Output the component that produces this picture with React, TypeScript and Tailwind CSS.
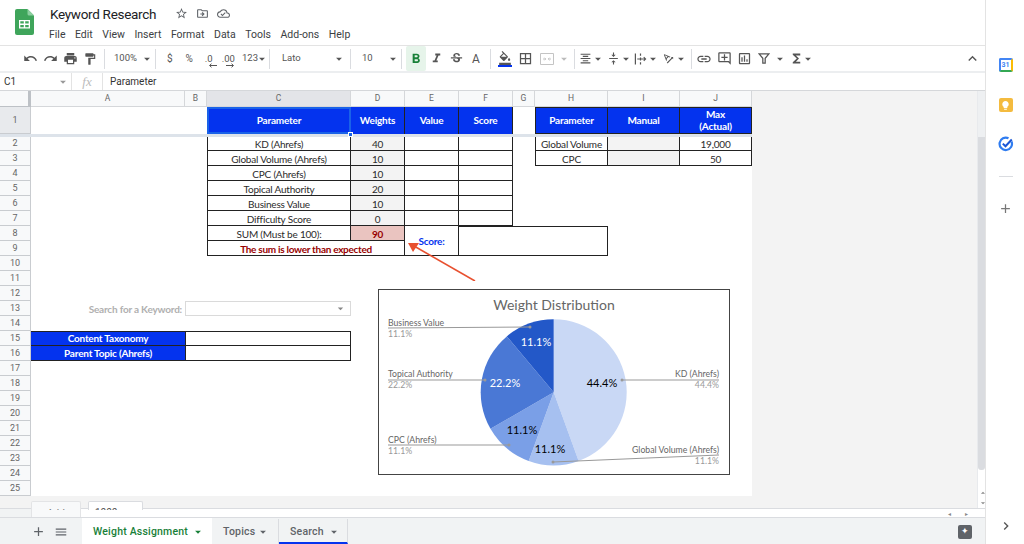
import React from 'react';
import {
  MdUndo, MdRedo, MdPrint, MdFormatPaint, MdFormatBold, MdFormatItalic, MdStrikethroughS,
  MdFormatColorFill, MdBorderAll, MdFormatAlignCenter, MdVerticalAlignCenter,
  MdTextRotationAngleup, MdLink, MdOutlineAddComment, MdOutlineInsertChart,
  MdFunctions, MdExpandLess, MdStarBorder, MdOutlineDriveFileMove,
  MdOutlineCloudDone, MdAdd, MdMenu, MdChevronRight, MdArrowDropDown, MdLightbulb,
  MdArrowDropUp,
} from 'react-icons/md';

const menus = ['File', 'Edit', 'View', 'Insert', 'Format', 'Data', 'Tools', 'Add-ons', 'Help'];
const columns = ['A', 'B', 'C', 'D', 'E', 'F', 'G', 'H', 'I', 'J'];

const line = 'border-r border-b border-[#222]';
const blueCell = 'flex items-center justify-center bg-[#0433ee] pb-px font-bold text-white';

function Sep() {
  return <div className="mx-[4px] h-[20px] w-px bg-[#dadce0]" />;
}

function Tool({ children, w = 'w-[20px]', className = '' }: { children: React.ReactNode; w?: string; className?: string }) {
  return <div className={`flex h-[25px] shrink-0 items-center justify-center text-[#555] ${w} ${className}`}>{children}</div>;
}

function Picker({ label, w, pad, caret = '' }: { label: string; w: string; pad: string; caret?: string }) {
  return (
    <div className={`flex h-[25px] shrink-0 items-center justify-between text-[#555] ${w} ${pad}`}>
      <span>{label}</span>
      <Caret className={`text-[#555] ${caret}`} />
    </div>
  );
}

function Caret({ className = 'text-[#555]' }: { className?: string }) {
  return <MdArrowDropDown size={14} className={`shrink-0 ${className}`} />;
}

function Decimal({ label, dir }: { label: string; dir: 'left' | 'right' }) {
  return (
    <div className="relative leading-none">
      <span>{label}</span>
      <svg className="absolute top-[9px] left-[3px]" width="10" height="5" viewBox="0 0 10 5">
        {dir === 'left' ? (
          <path d="M9 2.5H2M3.5 .7 1.5 2.5 3.5 4.3" fill="none" stroke="#555" />
        ) : (
          <path d="M1 2.5H8M6.500 .7 8.500 2.500 6.500 4.300" fill="none" stroke="#555" />
        )}
      </svg>
    </div>
  );
}

function MergeIcon() {
  return (
    <svg width="14" height="12" viewBox="0 0 14 12" fill="none" stroke="#c4c4c4">
      <path d="M.5 4V.5H13.500V4M.5 8V11.500H13.500V8M.5 4V8M13.500 4V8" />
      <path d="M3 6H5.500M4.500 4.700 5.800 6 4.500 7.300M11 6H8.500M9.500 4.700 8.200 6 9.500 7.300" />
    </svg>
  );
}

function OverflowIcon() {
  return (
    <svg width="14" height="14" viewBox="0 0 14 14" fill="none" stroke="#555">
      <path d="M1.500 1V13" strokeWidth="1.300" />
      <path d="M7 1V3.500M7 5.500V8.500M7 10.500V13" strokeWidth="1.300" />
      <path d="M3.500 7H12.500M10.500 5 12.500 7 10.500 9" strokeWidth="1.200" />
    </svg>
  );
}

function FilterIcon() {
  return (
    <svg width="12" height="11" viewBox="0 0 14 13" fill="none" stroke="#555" strokeWidth="1.500">
      <path d="M1.200 1H12.800L8.400 6.300V12H5.600V6.300Z" />
    </svg>
  );
}

function TasksIcon() {
  return (
    <svg width="16" height="16" viewBox="0 0 16 16" fill="none">
      <path d="M13.500 5.500A6.200 6.200 0 1 1 10.500 2.300" stroke="#2f7cf0" strokeWidth="2.200" />
      <path d="M4.800 7.600 7.500 10.300 13.800 3.500" stroke="#1a56d6" strokeWidth="2" />
    </svg>
  );
}

function RowHead({ n, active = false }: { n: number; active?: boolean }) {
  return (
    <div className={`flex items-center justify-center border-r border-b border-[#c9ccd0] font-['Roboto',sans-serif] text-[9px] tracking-normal text-[#666] ${active ? 'bg-[#e8eaed]' : 'bg-[#f8f9fa]'}`}>
      {n}
    </div>
  );
}

function Blank({ span = '' }: { span?: string }) {
  return <div className={span} />;
}

function Text({ children, gray = false, className = '' }: { children?: React.ReactNode; gray?: boolean; className?: string }) {
  return (
    <div className={`flex items-center justify-center whitespace-nowrap pt-px ${line} ${gray ? 'bg-[#f3f3f3]' : ''} ${className}`}>
      {children}
    </div>
  );
}

function ParamRow({ n, label, weight, extra }: { n: number; label: string; weight: string; extra?: React.ReactNode }) {
  return (
    <>
      <RowHead n={n} />
      <Blank />
      <Blank />
      <Text className="border-l">{label}</Text>
      <Text gray>{weight}</Text>
      <Text />
      <Text />
      {extra ?? <Blank span="col-span-4" />}
    </>
  );
}

function EmptyRow({ n }: { n: number }) {
  return (
    <>
      <RowHead n={n} />
      <Blank span="col-span-10" />
    </>
  );
}

function PieChart() {
  const cx = 175.7;
  const cy = 103.3;
  const r = 73;
  const pt = (deg: number) => {
    const a = (deg * Math.PI) / 180;
    return `${cx + r * Math.sin(a)} ${cy - r * Math.cos(a)}`;
  };
  const slices = [
    { from: 0, to: 160, color: '#c9d8f5' },
    { from: 160, to: 200, color: '#a6c0f0' },
    { from: 200, to: 240, color: '#7a9fe7' },
    { from: 240, to: 320, color: '#4a78d5' },
    { from: 320, to: 360, color: '#2358c8' },
  ];
  const leaders: [number, number, number, number][] = [
    [10, 39, 152, 38],
    [10, 91, 107, 91],
    [10, 156, 131, 156],
    [341, 91, 244, 91],
    [341, 166, 175, 173],
  ];
  return (
    <svg width="350" height="184" className="font-['Lato',sans-serif]">
      <g transform="translate(-1 -1)">
        <text x="176" y="21" textAnchor="middle" fontSize="14" fill="#666">Weight Distribution</text>
        {slices.map((s) => (
          <path
            key={s.from}
            d={`M${cx} ${cy} L${pt(s.from)} A${r} ${r} 0 ${s.to - s.from > 180 ? 1 : 0} 1 ${pt(s.to)} Z`}
            fill={s.color}
          />
        ))}
        {leaders.map(([x1, y1, x2, y2]) => (
          <g key={x1 + '-' + y1}>
            <line x1={x1} y1={y1} x2={x2} y2={y2} stroke="#999" />
            <circle cx={x2} cy={y2} r="1.500" fill="#999" />
          </g>
        ))}
        <g fontSize="8.700" fill="#666">
          <text x="10" y="37">Business Value</text>
          <text x="10" y="88">Topical Authority</text>
          <text x="10" y="154">CPC (Ahrefs)</text>
          <text x="341" y="88" textAnchor="end">KD (Ahrefs)</text>
          <text x="341" y="164" textAnchor="end">Global Volume (Ahrefs)</text>
        </g>
        <g fontSize="8.700" fill="#999">
          <text x="10" y="48">11.1%</text>
          <text x="10" y="99">22.2%</text>
          <text x="10" y="165">11.1%</text>
          <text x="341" y="99" textAnchor="end">44.4%</text>
          <text x="341" y="175" textAnchor="end">11.1%</text>
        </g>
        <g fontSize="11" textAnchor="middle">
          <text x="158" y="57" fill="#fff">11.1%</text>
          <text x="127" y="98" fill="#fff">22.2%</text>
          <text x="224" y="98" fill="#000">44.4%</text>
          <text x="144" y="145" fill="#000">11.1%</text>
          <text x="172" y="164" fill="#000">11.1%</text>
        </g>
      </g>
    </svg>
  );
}

function Sheet() {
  return (
    <div className="relative h-[426px] overflow-hidden bg-[#f3f3f3]">
      <div className="grid w-[752px] grid-cols-[31px_154px_22px_144px_54px_54px_54px_22px_73px_72px_72px] grid-rows-[16px_27px_3px_14px_repeat(23,15px)] bg-white font-['Lato',sans-serif] text-[10px] leading-none tracking-[-0.2px] text-[#2b2b2b]">
        {/* column letters */}
        <div className="border-r-[3px] border-b border-[#bdc1c6] bg-[#f8f9fa]" />
        {columns.map((c) => (
          <div key={c} className={`flex items-center justify-center border-r border-b border-[#d5d7da] font-['Roboto',sans-serif] text-[8.5px] tracking-normal text-[#666] ${c === 'C' ? 'bg-[#e3e4e8]' : 'bg-[#f8f9fa]'}`}>
            {c}
          </div>
        ))}

        {/* row 1 */}
        <RowHead n={1} active />
        <Blank span="col-span-2" />
        <div className={`${blueCell} border-2 border-[#1a62e8]`}>Parameter</div>
        <div className={`${blueCell} border-r border-[#222]`}>Weights</div>
        <div className={`${blueCell} border-r border-[#222]`}>Value</div>
        <div className={`${blueCell} border-r border-[#222]`}>Score</div>
        <Blank />
        <div className={`${blueCell} border border-[#222]`}>Parameter</div>
        <div className={`${blueCell} border-y border-r border-[#222]`}>Manual</div>
        <div className={`${blueCell} border-y border-r border-[#222] text-center leading-[12px]`}>Max<br />(Actual)</div>

        {/* frozen row divider */}
        <div className="col-span-11 bg-[#dde3ea]" />

        <ParamRow
          n={2}
          label="KD (Ahrefs)"
          weight="40"
          extra={
            <>
              <Blank />
              <Text className="border-l">Global Volume</Text>
              <Text gray />
              <Text>19,000</Text>
            </>
          }
        />
        <ParamRow
          n={3}
          label="Global Volume (Ahrefs)"
          weight="10"
          extra={
            <>
              <Blank />
              <Text className="border-l">CPC</Text>
              <Text gray />
              <Text>50</Text>
            </>
          }
        />
        <ParamRow n={4} label="CPC (Ahrefs)" weight="10" />
        <ParamRow n={5} label="Topical Authority" weight="20" />
        <ParamRow n={6} label="Business Value" weight="10" />
        <ParamRow n={7} label="Difficulty Score" weight="0" />

        {/* rows 8 and 9 share the score cells */}
        <RowHead n={8} />
        <Blank span="col-span-2" />
        <Text className="border-l">SUM (Must be 100):</Text>
        <div className={`flex items-center justify-center bg-[#eac4c0] pt-px font-bold text-[#980000] ${line}`}>90</div>
        <div className={`row-span-2 flex items-center justify-center pt-px font-bold text-[#0433ee] ${line}`}>Score:</div>
        <div className={`col-span-3 row-span-2 border-t border-[#222] ${line}`} />
        <Blank span="col-span-2" />
        <RowHead n={9} />
        <Blank span="col-span-2" />
        <div className={`col-span-2 flex items-center justify-center border-l pt-px font-bold tracking-[-0.29px] text-[#980000] ${line}`}>The sum is lower than expected</div>
        <Blank span="col-span-2" />

        <EmptyRow n={10} />
        <EmptyRow n={11} />
        <EmptyRow n={12} />

        <RowHead n={13} />
        <div className="flex items-center justify-end pt-px pr-[3px] font-bold text-[#b0b0b0]">Search for a Keyword:</div>
        <div className="col-span-2 flex items-center justify-end border border-[#dadada] pr-[3px]">
          <MdArrowDropDown size={13} className="text-[#888]" />
        </div>
        <Blank span="col-span-7" />

        <EmptyRow n={14} />

        <RowHead n={15} />
        <div className={`${blueCell} border-y border-[#222]`}>Content Taxonomy</div>
        <div className="col-span-2 border-y border-r border-l border-[#222]" />
        <Blank span="col-span-7" />
        <RowHead n={16} />
        <div className={`${blueCell} border-b border-[#222]`}>Parent Topic (Ahrefs)</div>
        <div className="col-span-2 border-r border-b border-l border-[#222]" />
        <Blank span="col-span-7" />

        {[17, 18, 19, 20, 21, 22, 23, 24, 25].map((n) => (
          <EmptyRow key={n} n={n} />
        ))}
      </div>

      {/* selection handle */}
      <div className="absolute top-[41px] left-[348px] h-[5px] w-[5px] border border-white bg-[#1a62e8]" />

      {/* annotation arrow */}
      <svg className="absolute top-[140px] left-[400px]" width="80" height="50">
        <line x1="75" y1="50" x2="14" y2="15" stroke="#e8502f" strokeWidth="1.600" />
        <path d="M8 12 L19 12 L13 21 Z" fill="#e8502f" />
      </svg>

      {/* floating chart */}
      <div className="absolute top-[198px] left-[378px] border border-[#444] bg-white">
        <PieChart />
      </div>

      {/* sheet scrollbars */}
      <div className="absolute top-0 left-[977px] flex h-[417px] w-[8px] flex-col border-l border-[#e8eaed] bg-white">
        <div className="h-[46px] bg-[#eef0f2]" />
        <div className="h-[333px] rounded-b-[3px] bg-[#dadce0]" />
        <div className="flex-1" />
        <MdArrowDropUp size={10} className="text-[#888]" />
        <MdArrowDropDown size={10} className="text-[#888]" />
      </div>
      <div className="absolute top-[417px] left-0 flex h-[9px] w-[985px] items-center justify-end border-t border-[#dadce0] bg-white pr-[7px]">
        <div className="absolute top-0 left-0 h-[9px] w-[31px] bg-[#f1f3f4]" />
        <div className="absolute top-[-8px] left-[31px] h-[17px] w-[50px] rounded-t-[2px] border border-b-0 border-[#e3e4e6] bg-[#f8f9fa]">
          <div className="h-[8px] overflow-hidden pt-[4px] text-center text-[10px] text-[#777]">Add</div>
        </div>
        <div className="absolute top-[-8px] left-[88px] h-[9px] w-[55px] overflow-hidden rounded-t-[2px] border border-b-0 border-[#dadce0] bg-white pt-[3px] pl-[6px] text-[10px] text-[#555]">1000</div>
        <span className="mr-[14px] text-[6px] text-[#888]">◂</span>
        <span className="mr-[10px] text-[6px] text-[#888]">▸</span>
      </div>
    </div>
  );
}

export default function App() {
  return (
    <div className="flex h-[544px] w-[1024px] overflow-hidden bg-white font-['Roboto',sans-serif]">
      <div className="flex w-[985px] shrink-0 flex-col">
        {/* title + menus */}
        <div className="flex h-[46px] border-b border-[#e3e3e3]">
          <div className="flex w-[49px] shrink-0 items-start pt-[9px] pl-[15px]">
            <svg width="19" height="26" viewBox="0 0 19 26">
              <path d="M2 0 H12.500 L19 6.500 V24 a2 2 0 0 1 -2 2 H2 a2 2 0 0 1 -2 -2 V2 a2 2 0 0 1 2 -2 Z" fill="#3fa55b" />
              <path d="M12.500 0 L19 6.500 H14 a1.500 1.500 0 0 1 -1.500 -1.500 Z" fill="#8ccfa0" />
              <path d="M4 11 H15 V19.500 H4 Z M5.300 12.300 V14.600 H8.800 V12.300 Z M10.200 12.300 V14.600 H13.700 V12.300 Z M5.300 16 V18.200 H8.800 V16 Z M10.200 16 V18.200 H13.700 V16 Z" fill="#fff" fillRule="evenodd" />
            </svg>
          </div>
          <div className="flex flex-col">
            <div className="flex h-[24px] items-end gap-[19px] pl-px">
              <span className="text-[13.500px] leading-[20px] tracking-[-0.3px] text-[#202124]">Keyword Research</span>
              <div className="flex items-center gap-[8px] pb-[4px] text-[#5f6368]">
                <MdStarBorder size={13} />
                <MdOutlineDriveFileMove size={13} />
                <MdOutlineCloudDone size={13} />
              </div>
            </div>
            <div className="mt-[3px] flex gap-[9.500px] text-[10.500px] text-[#3c4043]">
              {menus.map((m) => (
                <span key={m}>{m}</span>
              ))}
            </div>
          </div>
        </div>

        {/* toolbar */}
        <div className="flex h-[27px] items-center border-b-2 border-[#eceef0] pl-[20px] text-[9.500px] text-[#555]">
          <Tool><MdUndo size={15} /></Tool>
          <Tool><MdRedo size={15} /></Tool>
          <Tool><MdPrint size={15} /></Tool>
          <Tool><MdFormatPaint size={14} /></Tool>
          <Sep />
          <Picker label="100%" w="w-[42px]" pad="pl-[5px]" caret="-mr-[3px]" />
          <Sep />
          <Tool w="w-[19.500px]"><span className="text-[10px]">$</span></Tool>
          <Tool w="w-[19.500px]"><span className="text-[10px]">%</span></Tool>
          <Tool w="w-[19.500px]"><Decimal label=".0" dir="left" /></Tool>
          <Tool w="w-[19.500px]"><Decimal label=".00" dir="right" /></Tool>
          <Picker label="123" w="w-[31px]" pad="-mr-[4px] pl-[4px]" caret="-ml-[3px]" />
          <Sep />
          <Picker label="Lato" w="w-[72px]" pad="pl-[8px]" />
          <Sep />
          <Picker label="10" w="w-[42px]" pad="pl-[7px]" caret="-mr-[3px]" />
          <Sep />
          <Tool className="h-[21px] rounded-[2px] bg-[#e6f4ea] text-[#188038]"><MdFormatBold size={16} /></Tool>
          <Tool><MdFormatItalic size={15} /></Tool>
          <Tool><MdStrikethroughS size={15} /></Tool>
          <Tool><span className="text-[12px]">A</span></Tool>
          <Sep />
          <Tool className="flex-col">
            <MdFormatColorFill size={14} />
            <div className="h-[2px] w-[14px] bg-[#0433ee]" />
          </Tool>
          <Tool w="w-[21px]"><MdBorderAll size={15} /></Tool>
          <Tool w="w-[22px]"><MergeIcon /></Tool>
          <Tool w="w-[12px]"><Caret className="text-[#bbb]" /></Tool>
          <Sep />
          <Tool w="w-[13px]"><MdFormatAlignCenter size={15} /></Tool>
          <Tool w="w-[12px]" className="mr-[2.700px]"><Caret /></Tool>
          <Tool w="w-[13px]"><MdVerticalAlignCenter size={15} /></Tool>
          <Tool w="w-[12px]" className="mr-[2.700px]"><Caret /></Tool>
          <Tool w="w-[13px]"><OverflowIcon /></Tool>
          <Tool w="w-[12px]" className="mr-[2.700px]"><Caret /></Tool>
          <Tool w="w-[13px]"><MdTextRotationAngleup size={15} /></Tool>
          <Tool w="w-[12px]"><Caret /></Tool>
          <Sep />
          <Tool w="w-[16px]"><MdLink size={16} /></Tool>
          <Tool className="ml-[2px]"><MdOutlineAddComment size={15} /></Tool>
          <Tool><MdOutlineInsertChart size={15} /></Tool>
          <Tool><FilterIcon /></Tool>
          <Tool w="w-[12px]"><Caret /></Tool>
          <Tool><MdFunctions size={15} /></Tool>
          <Tool w="w-[12px]" className="-ml-[4px]"><Caret /></Tool>
          <Tool className="ml-auto mr-[3px]"><MdExpandLess size={17} /></Tool>
        </div>

        {/* formula bar */}
        <div className="flex h-[18px] items-center border-b border-[#d5d7da] text-[10px] text-[#333]">
          <div className="flex h-full w-[72px] items-center justify-between border-r border-[#e3e3e3] pr-[1px] pl-[4px]">
            <span>C1</span>
            <Caret className="text-[#999]" />
          </div>
          <div className="flex h-full w-[31px] items-center justify-center border-r border-[#e3e3e3] font-['Liberation_Serif',serif] text-[13px] text-[#bbb] italic">fx</div>
          <span className="pl-[7px]">Parameter</span>
        </div>

        <Sheet />

        {/* sheet tabs */}
        <div className="flex h-[27px] items-stretch border-t border-[#dadce0] bg-[#f1f3f4] pt-px text-[10.500px] font-medium tracking-[0.2px] text-[#5f6368]">
          <div className="flex w-[82px] items-center gap-[8px] pl-[31px]">
            <MdAdd size={15} />
            <MdMenu size={14} />
          </div>
          <div className="-mt-px flex w-[130px] items-center gap-[3px] bg-white pt-px pl-[11px] text-[#188038]">
            Weight Assignment
            <MdArrowDropDown size={14} />
          </div>
          <div className="flex w-[67px] items-center gap-[1px] border-r border-[#dadce0] pl-[11px]">
            Topics
            <MdArrowDropDown size={14} />
          </div>
          <div className="flex w-[69px] items-center gap-[3px] border-r border-b-2 border-r-[#dadce0] border-b-[#0433ee] pt-[2px] pl-[11px]">
            Search
            <MdArrowDropDown size={14} />
          </div>
          <div className="ml-auto mr-[13px] flex items-center">
            <div className="flex h-[14px] w-[14px] items-center justify-center rounded-[2px] bg-[#5f6368] text-[9px] text-white">✦</div>
          </div>
        </div>
      </div>

      {/* side panel */}
      <div className="flex flex-1 flex-col items-center border-l border-[#e3e3e3] pt-[58px] pl-px">
        <div className="h-[14px] w-[14px] rounded-[2px] border-2 border-t-[#4285f4] border-r-[#fbbc04] border-b-[#34a853] border-l-[#4285f4] bg-white text-center text-[7px] leading-[10px] font-bold text-[#4285f4]">31</div>
        <div className="mt-[26px] flex h-[14px] w-[14px] items-center justify-center rounded-[2px] bg-[#f4bb3f]">
          <MdLightbulb size={11} className="text-white" />
        </div>
        <div className="mt-[24px]"><TasksIcon /></div>
        <div className="mt-[24px] h-px w-[14px] bg-[#dadce0]" />
        <MdAdd size={15} className="mt-[24px] text-[#777]" />
        <div className="flex-1" />
        <MdChevronRight size={16} className="mb-[10px] text-[#555]" />
      </div>
    </div>
  );
}
